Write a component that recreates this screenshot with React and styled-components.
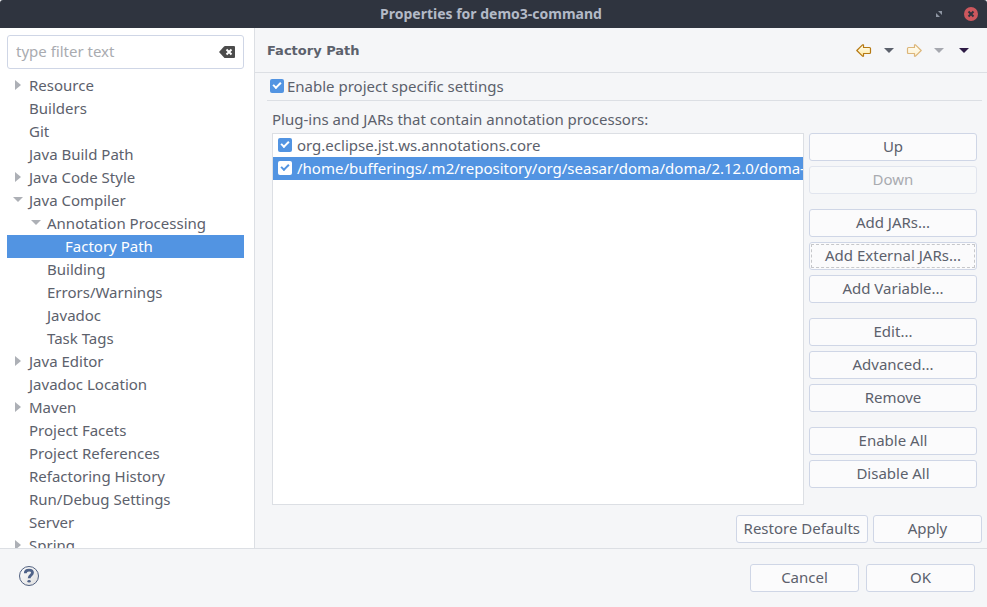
import React, { useState } from "react";
import styled, { createGlobalStyle, css } from "styled-components";

const color = {
  bg: "#f5f6f8",
  text: "#5c616c",
  muted: "#a9abb0",
  line: "#dcdfe4",
  border: "#cfd6e6",
  accent: "#5294e2",
  title: "#2f343f",
};

const GlobalStyle = createGlobalStyle`
  *, *::before, *::after { box-sizing: border-box; }
  body {
    margin: 0;
    background: ${color.bg};
    color: ${color.text};
    font: 15px/20px "Noto Sans", "Open Sans", sans-serif;
  }
  button, input { font: inherit; color: inherit; margin: 0; }
`;

const Window = styled.div`
  display: flex;
  flex-direction: column;
  height: 100vh;
`;

const TitleBar = styled.header`
  display: grid;
  grid-template-columns: 1fr auto 1fr;
  align-items: center;
  height: 28px;
  flex: none;
  padding: 0 9px 0 4px;
  background: ${color.title};
  border-radius: 3px 3px 0 0;
`;

const WindowTitle = styled.h1`
  grid-column: 2;
  margin: 0;
  font-size: 14px;
  line-height: 20px;
  font-weight: 700;
  color: #b3bac7;
`;

const WindowControls = styled.div`
  display: flex;
  justify-content: flex-end;
  align-items: center;
  gap: 22px;
`;

const IconButton = styled.button`
  display: flex;
  align-items: center;
  justify-content: center;
  flex: none;
  padding: 0;
  border: 0;
  background: none;
`;

const Body = styled.div`
  display: flex;
  flex: 1;
  min-height: 0;
  border-bottom: 1px solid ${color.line};
`;

const Sidebar = styled.nav`
  display: flex;
  flex-direction: column;
  gap: 5px;
  width: 255px;
  flex: none;
  padding: 7px 10px 0 7px;
  background: #fff;
  border-right: 1px solid ${color.line};
`;

const SearchBox = styled.div`
  display: flex;
  align-items: center;
  height: 34px;
  flex: none;
  padding: 0 8px;
  background: #fff;
  border: 1px solid ${color.border};
  border-radius: 3px;
`;

const SearchInput = styled.input`
  flex: 1;
  min-width: 0;
  padding: 0 0 2px;
  border: 0;
  outline: 0;
  background: none;
  &::placeholder { color: ${color.muted}; opacity: 1; }
`;

const Tree = styled.ul`
  flex: 1;
  min-height: 0;
  margin: 0;
  padding: 0;
  list-style: none;
  overflow-y: auto;
  scrollbar-width: none;
`;

const TreeRow = styled.li`
  display: flex;
  align-items: center;
  height: 23px;
  padding-bottom: 2px;
  padding-left: ${(p) => p.$depth * 18 + 2}px;
  cursor: default;
  ${(p) => p.$selected && css`
    background: ${color.accent};
    color: #fff;
  `}
`;

const Toggle = styled(IconButton)`
  width: 18px;
  height: 20px;
  margin-right: 2px;
`;

const Main = styled.main`
  display: flex;
  flex-direction: column;
  flex: 1;
  min-width: 0;
`;

const PageHeader = styled.div`
  display: flex;
  align-items: center;
  justify-content: space-between;
  height: 45px;
  flex: none;
  padding: 0 18px 0 12px;
  border-bottom: 1px solid ${color.line};
`;

const PageTitle = styled.h2`
  margin: 0;
  padding-top: 2px;
  font: bold 13px/20px "DejaVu Sans", sans-serif;
`;

const NavTools = styled.div`
  display: flex;
  align-items: center;
  gap: 15px;
`;

const HistoryTools = styled.div`
  display: flex;
  align-items: center;
  gap: 12px;
`;

const Settings = styled.div`
  display: flex;
  flex-direction: column;
  flex: 1;
  min-height: 0;
  padding: 0 5px 5px 12px;
`;

const EnableRow = styled.label`
  display: flex;
  align-items: center;
  gap: 3px;
  height: 28px;
  flex: none;
  padding: 0 0 2px 3px;
  border-bottom: 1px solid ${color.line};
`;

const Check = styled.input`
  appearance: none;
  width: 14px;
  height: 14px;
  flex: none;
  border-radius: 2px;
  background: ${(p) => (p.$inverse ? "#fff" : color.accent)};
  display: grid;
  place-items: center;
  &:checked::after {
    content: "";
    width: 8px;
    height: 5px;
    margin-bottom: 3px;
    border: solid ${(p) => (p.$inverse ? color.accent : "#fff")};
    border-width: 0 0 2px 2px;
    transform: rotate(-45deg);
  }
`;

const ListLabel = styled.div`
  padding: 8px 5px 4px;
`;

const ListArea = styled.div`
  display: flex;
  gap: 5px;
  flex: 1;
  min-height: 0;
  padding: 0 5px;
`;

const JarList = styled.ul`
  flex: 1;
  min-width: 0;
  margin: 0;
  padding: 0;
  list-style: none;
  overflow: hidden;
  background: #fff;
  border: 1px solid ${color.line};
`;

const JarRow = styled.li`
  height: 23px;
  padding-left: 5px;
  ${(p) => p.$selected && css`
    background: ${color.accent};
    color: #fff;
  `}
`;

const JarLabel = styled.label`
  display: flex;
  align-items: center;
  gap: 5px;
  height: 23px;
  padding-bottom: 2px;
  white-space: nowrap;
`;

const ButtonColumn = styled.div`
  display: flex;
  flex-direction: column;
  gap: 15px;
  width: 168px;
  flex: none;
`;

const ButtonGroup = styled.div`
  display: flex;
  flex-direction: column;
  gap: 5px;
`;

const Button = styled.button`
  height: 28px;
  flex: none;
  min-width: 109px;
  padding: 0 7px 2px;
  background: #fbfbfc;
  border: 1px solid ${color.border};
  border-radius: 3px;
  white-space: nowrap;
  &:disabled {
    color: ${color.muted};
    background: #f8f9fa;
    border-color: #e1e5ee;
  }
  ${(p) => p.$focused && css`
    outline: 1px dashed #c6c7ca;
    outline-offset: -3px;
  `}
`;

const PageActions = styled.div`
  display: flex;
  justify-content: flex-end;
  gap: 5px;
  padding-top: 10px;
`;

const Footer = styled.footer`
  display: flex;
  align-items: flex-start;
  justify-content: space-between;
  flex: none;
  padding: 15px 12px 15px 18px;
`;

const FooterActions = styled.div`
  display: flex;
  gap: 7px;
`;

const CaretDown = ({ fill }) => (
  <svg width="10" height="5" viewBox="0 0 10 5" aria-hidden="true">
    <path d="M0 0h10L5 5z" fill={fill} />
  </svg>
);

const CaretRight = () => (
  <svg width="6" height="10" viewBox="0 0 6 10" aria-hidden="true">
    <path d="M0 0v10l6-5z" fill="#adb0b6" />
  </svg>
);

const HistoryArrow = ({ forward }) => (
  <svg width="16" height="13" viewBox="0 0 16 13" aria-hidden="true">
    <defs>
      <linearGradient id={forward ? "fwd" : "back"} x1="0" y1="0" x2="0" y2="1">
        <stop offset="0" stopColor="#fffef5" />
        <stop offset="1" stopColor={forward ? "#fdf0cf" : "#ffe9a0"} />
      </linearGradient>
    </defs>
    <path
      d={forward
        ? "M8.500 .8H9.500L15.200 6.500 9.500 12.200H8.500V9.500H2.500Q1.500 9.500 1.500 8.500V4.500Q1.500 3.500 2.500 3.500H8.500Z"
        : "M7.500 .8H6.500L.8 6.500 6.500 12.200H7.500V9.500H13.500Q14.500 9.500 14.500 8.500V4.500Q14.500 3.500 13.500 3.500H7.500Z"}
      fill={`url(#${forward ? "fwd" : "back"})`}
      stroke={forward ? "#dcb67a" : "#b67a14"}
      strokeWidth="1.200"
      strokeLinejoin="round"
    />
  </svg>
);

const ClearIcon = () => (
  <svg width="16" height="12" viewBox="0 0 16 12" aria-hidden="true">
    <path d="M0 6 5 0.5Q5.500 0 6 0H15Q16 0 16 1V11Q16 12 15 12H6Q5.500 12 5 11.500Z" fill="#4c4c4c" />
    <path d="M7.500 3.500l5 5M12.500 3.500l-5 5" stroke="#fff" strokeWidth="2" />
  </svg>
);

const RestoreIcon = () => (
  <svg width="6" height="6" viewBox="0 0 6 6" aria-hidden="true">
    <path d="M2 0h4v4zM0 2l4 4H0z" fill="#8f96a3" />
  </svg>
);

const CloseIcon = () => (
  <svg width="14" height="14" viewBox="0 0 14 14" aria-hidden="true">
    <circle cx="7" cy="7" r="7" fill="#cc575d" />
    <path d="M4.500 4.500l5 5M9.500 4.500l-5 5" stroke="#2f343f" strokeWidth="2" />
  </svg>
);

const HelpIcon = () => (
  <svg width="22" height="24" viewBox="0 -1 22 24" aria-hidden="true">
    <defs>
      <linearGradient id="help" x1="0" y1="0" x2="1" y2="1">
        <stop offset="0" stopColor="#fff" />
        <stop offset="1" stopColor="#dedede" />
      </linearGradient>
    </defs>
    <circle cx="11" cy="11" r="9.500" fill="url(#help)" stroke="#506080" />
    <path
      d="M7.300 8.200C7.300 5.800 9 5.200 11 5.200C13.200 5.200 14.500 6 14.500 7.800C14.500 10.200 11.200 10.200 11.200 13.200"
      fill="none" stroke="#4f6288" strokeWidth="2.800"
    />
    <ellipse cx="11.100" cy="16.200" rx="1.700" ry="1.300" fill="#4f6288" />
  </svg>
);

const treeItems = [
  { name: "Resource", depth: 0, state: "closed" },
  { name: "Builders", depth: 0 },
  { name: "Git", depth: 0 },
  { name: "Java Build Path", depth: 0 },
  { name: "Java Code Style", depth: 0, state: "closed" },
  { name: "Java Compiler", depth: 0, state: "open" },
  { name: "Annotation Processing", depth: 1, state: "open" },
  { name: "Factory Path", depth: 2 },
  { name: "Building", depth: 1 },
  { name: "Errors/Warnings", depth: 1 },
  { name: "Javadoc", depth: 1 },
  { name: "Task Tags", depth: 1 },
  { name: "Java Editor", depth: 0, state: "closed" },
  { name: "Javadoc Location", depth: 0 },
  { name: "Maven", depth: 0, state: "closed" },
  { name: "Project Facets", depth: 0 },
  { name: "Project References", depth: 0 },
  { name: "Refactoring History", depth: 0 },
  { name: "Run/Debug Settings", depth: 0 },
  { name: "Server", depth: 0 },
  { name: "Spring", depth: 0, state: "closed" },
];

const jars = [
  "org.eclipse.jst.ws.annotations.core",
  "/home/bufferings/.m2/repository/org/seasar/doma/doma/2.12.0/doma-2.12.0.jar",
];

const buttonGroups = [
  ["Up", "Down"],
  ["Add JARs...", "Add External JARs...", "Add Variable..."],
  ["Edit...", "Advanced...", "Remove"],
  ["Enable All", "Disable All"],
];

export default function App() {
  const [page, setPage] = useState("Factory Path");
  const [jar, setJar] = useState(1);

  return (
    <Window>
      <GlobalStyle />
      <TitleBar>
        <WindowTitle>Properties for demo3-command</WindowTitle>
        <WindowControls>
          <IconButton aria-label="Restore window"><RestoreIcon /></IconButton>
          <IconButton aria-label="Close window"><CloseIcon /></IconButton>
        </WindowControls>
      </TitleBar>

      <Body>
        <Sidebar aria-label="Property pages">
          <SearchBox>
            <SearchInput type="text" placeholder="type filter text" aria-label="Filter" />
            <IconButton aria-label="Clear filter"><ClearIcon /></IconButton>
          </SearchBox>
          <Tree role="tree">
            {treeItems.map(({ name, depth, state }) => (
              <TreeRow
                key={name}
                role="treeitem"
                aria-level={depth + 1}
                aria-expanded={state && state === "open"}
                aria-selected={name === page}
                $depth={depth}
                $selected={name === page}
                onClick={() => setPage(name)}
              >
                <Toggle as={state ? "button" : "span"} aria-label={state && `Toggle ${name}`}>
                  {state === "closed" && <CaretRight />}
                  {state === "open" && <CaretDown fill="#adb0b6" />}
                </Toggle>
                {name}
              </TreeRow>
            ))}
          </Tree>
        </Sidebar>

        <Main>
          <PageHeader>
            <PageTitle>Factory Path</PageTitle>
            <NavTools>
              <HistoryTools>
                <IconButton aria-label="Back"><HistoryArrow /></IconButton>
                <IconButton aria-label="Back history"><CaretDown fill="#5c616c" /></IconButton>
                <IconButton aria-label="Forward"><HistoryArrow forward /></IconButton>
                <IconButton aria-label="Forward history"><CaretDown fill="#a6a8af" /></IconButton>
              </HistoryTools>
              <IconButton aria-label="View menu"><CaretDown fill="#2d1b45" /></IconButton>
            </NavTools>
          </PageHeader>

          <Settings>
            <EnableRow>
              <Check type="checkbox" defaultChecked />
              Enable project specific settings
            </EnableRow>
            <ListLabel id="jar-label">Plug-ins and JARs that contain annotation processors:</ListLabel>
            <ListArea>
              <JarList aria-labelledby="jar-label">
                {jars.map((name, i) => (
                  <JarRow key={name} $selected={i === jar} onClick={() => setJar(i)}>
                    <JarLabel>
                      <Check type="checkbox" defaultChecked $inverse={i === jar} />
                      {name}
                    </JarLabel>
                  </JarRow>
                ))}
              </JarList>
              <ButtonColumn>
                {buttonGroups.map((group) => (
                  <ButtonGroup key={group[0]}>
                    {group.map((name) => (
                      <Button
                        key={name}
                        disabled={name === "Down"}
                        $focused={name === "Add External JARs..."}
                      >
                        {name}
                      </Button>
                    ))}
                  </ButtonGroup>
                ))}
              </ButtonColumn>
            </ListArea>
            <PageActions>
              <Button>Restore Defaults</Button>
              <Button>Apply</Button>
            </PageActions>
          </Settings>
        </Main>
      </Body>

      <Footer>
        <IconButton aria-label="Help"><HelpIcon /></IconButton>
        <FooterActions>
          <Button>Cancel</Button>
          <Button>OK</Button>
        </FooterActions>
      </Footer>
    </Window>
  );
}
